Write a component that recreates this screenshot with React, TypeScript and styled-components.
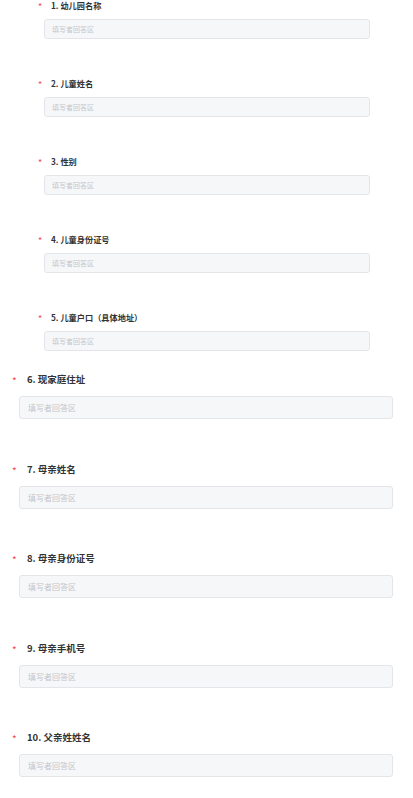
import React from 'react';
import styled, {createGlobalStyle, css} from 'styled-components';

const GlobalStyle = createGlobalStyle`
	html, body {
		margin: 0;
		padding: 0;
		background: #ffffff;
	}
	body {
		font-family: "Noto Sans CJK SC", "Noto Sans", sans-serif;
	}
`;

const Page = styled.div`
	width: 413px;
	height: 798px;
	overflow: hidden;
	background: #ffffff;
`;

const Question = styled.div<{$compact?: boolean}>`
	display: flex;
	flex-direction: column;
	margin-bottom: 42.5px;
	${({$compact}) =>
		$compact &&
		css`
			margin-bottom: 39px;
			&:last-child {
				margin-bottom: 21px;
			}
		`};
`;

const Title = styled.div<{$compact?: boolean}>`
	display: flex;
	align-items: center;
	padding-left: 12px;
	height: 14px;
	font-size: 9.5px;
	font-weight: 700;
	color: #333333;
	white-space: nowrap;
	${({$compact}) =>
		$compact &&
		css`
			padding-left: 38px;
			height: 10px;
			font-size: 8.2px;
		`};
`;

const Star = styled.span<{$compact?: boolean}>`
	width: 15px;
	padding-top: 4px;
	color: #f0484f;
	font-size: 10px;
	font-weight: 400;
	line-height: 1;
	${({$compact}) =>
		$compact &&
		css`
			width: 13px;
			padding-top: 3px;
			font-size: 9px;
		`};
`;

const Answer = styled.input<{$compact?: boolean}>`
	display: block;
	box-sizing: border-box;
	margin: 10px 20px 0 19px;
	width: 374px;
	height: 23px;
	padding: 0 8px;
	border: 1px solid #e3e5e9;
	border-radius: 3px;
	background: #f6f7f9;
	font-family: "Noto Sans CJK SC", "Noto Sans", sans-serif;
	font-size: 8px;
	color: #333333;
	outline: none;
	&::placeholder {
		color: #c3c6cc;
	}
	${({$compact}) =>
		$compact &&
		css`
			margin: 9px 43px 0 44px;
			width: 326px;
			height: 20px;
			padding: 0 7px;
			font-size: 7px;
		`};
`;

const questions = [
	'幼儿园名称',
	'儿童姓名',
	'性别',
	'儿童身份证号',
	'儿童户口（具体地址）',
	'现家庭住址',
	'母亲姓名',
	'母亲身份证号',
	'母亲手机号',
	'父亲姓姓名',
];

export default function App() {
	return (
		<Page>
			<GlobalStyle />
			<div>
				{questions.slice(0, 5).map((q, i) => (
					<Question key={q} $compact>
						<Title $compact>
							<Star $compact>*</Star>
							{i + 1}. {q}
						</Title>
						<Answer $compact placeholder="填写者回答区" />
					</Question>
				))}
			</div>
			<div>
				{questions.slice(5).map((q, i) => (
					<Question key={q}>
						<Title>
							<Star>*</Star>
							{i + 6}. {q}
						</Title>
						<Answer placeholder="填写者回答区" />
					</Question>
				))}
			</div>
		</Page>
	);
}
